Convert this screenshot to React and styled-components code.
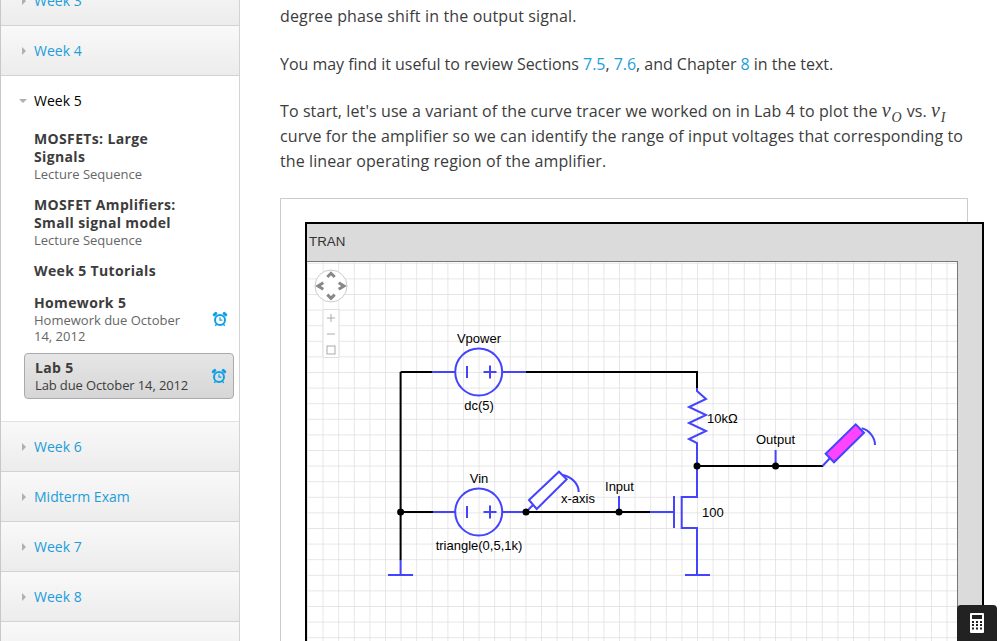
import React from 'react';
import styled, { createGlobalStyle } from 'styled-components';

const blue = '#4444ff';

const weeksBefore = ['Week 3', 'Week 4'];
const weeksAfter = ['Week 6', 'Midterm Exam', 'Week 7', 'Week 8', 'Week 9'];

const lessons = [
  { title: 'MOSFETs: Large Signals', sub: 'Lecture Sequence' },
  { title: 'MOSFET Amplifiers: Small signal model', sub: 'Lecture Sequence' },
  { title: 'Week 5 Tutorials' },
  { title: 'Homework 5', sub: 'Homework due October 14, 2012', due: true },
  { title: 'Lab 5', sub: 'Lab due October 14, 2012', due: true, active: true },
];

const AlarmIcon = () => (
  <svg width="16" height="16" viewBox="0 0 16 16" fill="none">
    <circle cx="8" cy="9" r="5" stroke="#0ea0e6" strokeWidth="2" />
    <path d="M8 6.200v3h2.400" stroke="#0ea0e6" strokeWidth="1.200" />
    <path d="M2.200 3.800 3.800 2.400M13.800 3.800 12.200 2.400" stroke="#0ea0e6" strokeWidth="3" strokeLinecap="round" />
    <path d="M4.500 13 3.400 15M11.500 13l1.100 2" stroke="#0ea0e6" strokeWidth="1.400" />
  </svg>
);

const CalculatorIcon = () => (
  <svg width="14" height="20" viewBox="0 0 14 20">
    <rect width="14" height="20" rx="1" fill="#fff" />
    <rect x="2" y="2" width="10" height="4" fill="#222" />
    {[8, 11, 14.5].map(y =>
      [2, 6, 10].map(x => <rect key={`${x}-${y}`} x={x} y={y} width="2" height="2" fill="#222" />)
    )}
  </svg>
);

const Week = ({ label }) => (
  <WeekHeader>
    <ClosedArrow />
    <WeekLink>{label}</WeekLink>
  </WeekHeader>
);

const Schematic = () => (
  <Drawing viewBox="307 261 650 380">
    <defs>
      <pattern id="grid" x="400.6" y="371" width="15.6" height="15.6" patternUnits="userSpaceOnUse">
        <path d="M0 0H15.6M0 0V15.6" stroke="#dedede" strokeWidth="1.400" fill="none" />
      </pattern>
    </defs>
    <rect x="307" y="261" width="650" height="380" fill="url(#grid)" />

    <circle cx="331" cy="285" r="16" fill="#fff" stroke="#ccc" />
    <Chevrons d="M327.300 276L331 272.300 334.700 276M327.300 293.700L331 297.300 334.700 293.700M323.300 281.700L318 285 323.300 288.300M338.700 281.700L344 285 338.700 288.300" />
    <ZoomBox x="323" y="308.500" width="16" height="48" rx="1" />
    <ZoomMark d="M331 313v8M327 317h8M327 333h8" />
    <ZoomMark as="rect" x="327" y="345" width="8" height="8" />

    <Wire d="M526 371H697V388M400.600 371H432M400.600 371V559M400.600 511H433M526 511H650M697 465H823" />
    <Part d="M432 371H455M502 371H526M433 511H456M502 511H526M400.600 559V574M388 574H413" />
    <Part d="M697 387V390L706 398 689 406 706 414 689 422 706 430 689 438 697 442V496H681.700V527H697V574M685 574H710" />
    <Part d="M674 495V527M650 511H674M619 511V495M775.600 465V449" />
    <Part d="M467 365V377M483.500 371H496.500M490 364.500V377.500M467 505V517M483.500 511H496.500M490 504.500V517.500" />
    <Part as="circle" cx="478.700" cy="371" r="23.500" />
    <Part as="circle" cx="478.700" cy="511" r="23.500" />

    <Part d="M526 511L533 504M563 474C572 476 578.700 483 578.700 491" />
    <Probe points="529,499 559,470.700 566.700,478.300 536.700,508" fill="#fff" />
    <Part d="M822.600 465L830 457M861.700 427.300C869 429 875 436 875 444" />
    <Probe points="825.700,452.700 855.700,423.300 864,431.700 834,461.300" fill="#ff44ff" />

    {[[400.6, 511], [526, 511], [619, 511], [697, 465], [775.6, 465]].map(([cx, cy]) => (
      <circle key={cx} cx={cx} cy={cy} r="3.500" fill="#000" />
    ))}

    <Label x="479" y="342" textAnchor="middle">Vpower</Label>
    <Label x="479" y="409" textAnchor="middle">dc(5)</Label>
    <Label x="479" y="482" textAnchor="middle">Vin</Label>
    <Label x="479" y="549" textAnchor="middle">triangle(0,5,1k)</Label>
    <Label x="578" y="502" textAnchor="middle">x-axis</Label>
    <Label x="619.500" y="490" textAnchor="middle">Input</Label>
    <Label x="775.500" y="443" textAnchor="middle">Output</Label>
    <Label x="707" y="422">10kΩ</Label>
    <Label x="702" y="516">100</Label>
  </Drawing>
);

const App = () => (
  <Page>
    <GlobalStyle />
    <Sidebar>
      {weeksBefore.map(label => <Week key={label} label={label} />)}
      <OpenWeek>
        <OpenHeader>
          <OpenArrow />
          <span>Week 5</span>
        </OpenHeader>
        <LessonList>
          {lessons.map(lesson => (
            <Lesson key={lesson.title} $active={lesson.active}>
              <LessonText>
                <LessonTitle>{lesson.title}</LessonTitle>
                {lesson.sub && <LessonSub $active={lesson.active}>{lesson.sub}</LessonSub>}
              </LessonText>
              {lesson.due && <AlarmIcon />}
            </Lesson>
          ))}
        </LessonList>
      </OpenWeek>
      {weeksAfter.map(label => <Week key={label} label={label} />)}
    </Sidebar>

    <Main>
      <Paragraph $spacing={0.15} $gap={23}>degree phase shift in the output signal.</Paragraph>
      <Paragraph $spacing={-0.03} $gap={22}>
        You may find it useful to review Sections <Link>7.5</Link>, <Link>7.6</Link>, and Chapter{' '}
        <Link>8</Link> in the text.
      </Paragraph>
      <Paragraph $spacing={0.1} $gap={24}>
        To start, let's use a variant of the curve tracer we worked on in Lab 4 to plot the{' '}
        <MathVar>v<sub>O</sub></MathVar> vs. <MathVar>v<sub>I</sub></MathVar> curve for the amplifier
        so we can identify the range of input voltages that corresponding to the linear operating
        region of the amplifier.
      </Paragraph>
      <Figure>
        <Simulator>
          <ToolBar>TRAN</ToolBar>
          <Canvas>
            <Schematic />
          </Canvas>
        </Simulator>
      </Figure>
    </Main>

    <CalculatorButton>
      <CalculatorIcon />
    </CalculatorButton>
  </Page>
);

const GlobalStyle = createGlobalStyle`
  html, body {
    margin: 0;
    height: 641px;
    overflow: hidden;
    background: #fff;
  }
  * {
    box-sizing: border-box;
  }
`;

const Page = styled.div`
  position: relative;
  display: flex;
  height: 641px;
  overflow: hidden;
  font-family: 'Open Sans', sans-serif;
`;

const Sidebar = styled.aside`
  flex: 0 0 240px;
  margin-top: -24px;
  border-left: 1px solid #c8c8c8;
  border-right: 1px solid #d3d3d3;
  font-size: 14px;
`;

const WeekHeader = styled.div`
  display: flex;
  align-items: center;
  height: 50px;
  padding-left: 21px;
  background: linear-gradient(#f9f9f9, #ececec);
  border-bottom: 1px solid #d3d3d3;
`;

const ClosedArrow = styled.i`
  width: 0;
  height: 0;
  margin-right: 8px;
  border-left: 4px solid #b0b0b0;
  border-top: 4px solid transparent;
  border-bottom: 4px solid transparent;
`;

const WeekLink = styled.span`
  color: #1d9dd9;
`;

const OpenWeek = styled.section`
  padding-bottom: 22px;
  border-bottom: 1px solid #e2e2e2;
`;

const OpenHeader = styled.div`
  display: flex;
  align-items: center;
  height: 49px;
  padding-left: 18px;
  color: #000;
`;

const OpenArrow = styled.i`
  width: 0;
  height: 0;
  margin-right: 7px;
  border-top: 4px solid #b0b0b0;
  border-left: 4px solid transparent;
  border-right: 4px solid transparent;
`;

const LessonList = styled.div`
  display: flex;
  flex-direction: column;
  gap: 4px;
  padding: 0 5px 0 23px;
`;

const Lesson = styled.div`
  display: flex;
  align-items: center;
  justify-content: space-between;
  padding: 5px 6px 5px 10px;
  ${p =>
    p.$active &&
    `
    background: linear-gradient(#e6e6e6, #d6d6d6);
    border: 1px solid #aaa;
    border-radius: 4px;
  `}
  svg {
    flex: none;
  }
`;

const LessonText = styled.div`
  width: 160px;
`;

const LessonTitle = styled.div`
  font-weight: 700;
  line-height: 18px;
  letter-spacing: 0.35px;
  color: #3c3c3c;
`;

const LessonSub = styled.div`
  font-size: 13px;
  line-height: 16px;
  letter-spacing: ${p => (p.$active ? '-0.12px' : '0')};
  color: ${p => (p.$active ? '#3c3c3c' : '#666')};
`;

const Main = styled.main`
  flex: 0 0 688px;
  min-width: 0;
  margin-left: 40px;
  padding-top: 4px;
  color: #3c3c3c;
  font-size: 16px;
  line-height: 25px;
`;

const Paragraph = styled.p`
  margin: 0 0 ${p => p.$gap}px;
  letter-spacing: ${p => p.$spacing}px;
`;

const Link = styled.a`
  color: #1d9dd9;
`;

const MathVar = styled.em`
  font-family: 'Liberation Serif', serif;
  font-size: 20px;
  line-height: 0;
  letter-spacing: 0.8px;
  sub {
    font-size: 14px;
    line-height: 0;
  }
`;

const Figure = styled.div`
  height: 520px;
  padding: 23px 0 0 24px;
  border: 1px solid #ccc;
`;

const Simulator = styled.div`
  width: 679px;
  height: 500px;
  padding-right: 24px;
  background: #dbdbdb;
  border: 2px solid #000;
`;

const ToolBar = styled.div`
  height: 38px;
  padding-left: 2px;
  font: 13.33px/36px 'Liberation Sans', sans-serif;
  letter-spacing: 0;
  color: #333;
  border-bottom: 1px solid #777;
`;

const Canvas = styled.div`
  background: #fff;
  border-right: 1px solid #777;
`;

const Drawing = styled.svg`
  display: block;
  width: 650px;
  height: 380px;
`;

const Wire = styled.path`
  fill: none;
  stroke: #000;
  stroke-width: 2;
`;

const Part = styled.path`
  fill: none;
  stroke: ${blue};
  stroke-width: 2;
`;

const Probe = styled.polygon`
  stroke: ${blue};
  stroke-width: 2;
`;

const Chevrons = styled.path`
  fill: none;
  stroke: #888;
  stroke-width: 3;
`;

const ZoomBox = styled.rect`
  fill: #fff;
  stroke: #ddd;
`;

const ZoomMark = styled.path`
  fill: none;
  stroke: #aaa;
  stroke-width: 1;
`;

const Label = styled.text`
  font: 13px 'Liberation Sans', sans-serif;
  letter-spacing: 0;
  fill: #000;
`;

const CalculatorButton = styled.button`
  position: absolute;
  right: 10px;
  bottom: 0;
  display: flex;
  align-items: center;
  justify-content: center;
  width: 40px;
  height: 36px;
  padding: 0;
  background: #222;
  border: 0;
  border-radius: 4px 4px 0 0;
`;

export default App;
